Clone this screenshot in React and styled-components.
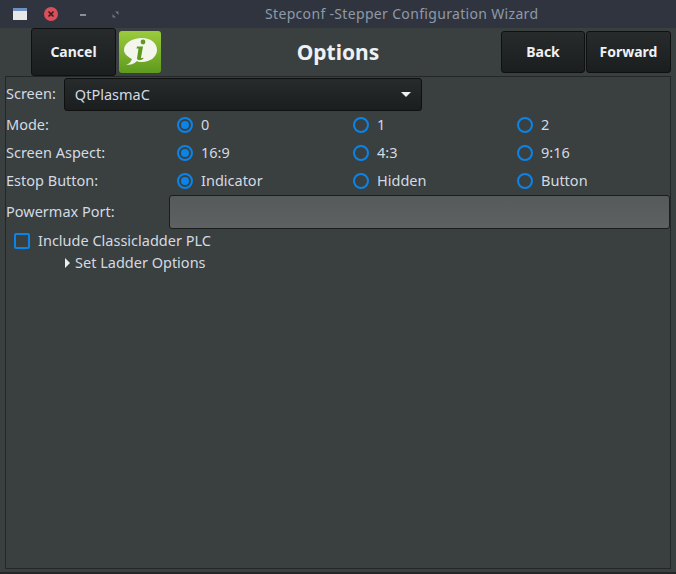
import React from "react";
import styled, { createGlobalStyle } from "styled-components";

const Global = createGlobalStyle`
  html, body { margin: 0; padding: 0; background: #3a3f3f; }
  body { font-family: "Noto Sans", sans-serif; font-size: 14.5px; color: #d3dae3; }
  #root { width: 676px; height: 574px; overflow: hidden; }
`;

const Win = styled.div`
  width: 676px; height: 574px; display: flex; flex-direction: column;
  background: #3a3f3f; box-sizing: border-box; position: relative;
  border-bottom: 2px solid #242727;
`;
const TitleBar = styled.div`
  height: 28px; flex: none; background: #2f343f; display: flex; align-items: center;
  position: relative; box-sizing: border-box; padding-left: 13px; gap: 14px;
`;
const Title = styled.div`
  position: absolute; left: 265px; top: 4px; line-height: 20px; font-size: 14px;
  color: #9099a8; white-space: nowrap; letter-spacing: 0.33px;
`;
const AppIcon = styled.div`
  width: 14px; height: 12px; background: #e8e8e8; border-top: 3px solid #6f8fc0; box-sizing: border-box;
`;
const CloseDot = styled.div`
  width: 14px; height: 14px; border-radius: 50%; background: #d9505a; margin-left: 3px;
  display: flex; align-items: center; justify-content: center;
`;
const WinGlyph = styled.svg`
  width: 9px; height: 9px; margin-left: ${(p) => p.$ml}px; flex: none;
`;
const Toolbar = styled.div`
  height: 48px; flex: none; position: relative; display: flex; align-items: center; padding-left: 31px; padding-right: 5px;
`;
const Btn = styled.button`
  font: 700 14px "Noto Sans", sans-serif; color: #eef1f4; border: 1px solid #0f1111; border-radius: 3px;
  background: linear-gradient(#272b2b, #1a1e1e); width: ${(p) => p.$w}px; height: ${(p) => p.$h}px;
  padding: 0 0 2px; margin-left: ${(p) => p.$ml || 0}px; flex: none; box-sizing: border-box;
`;
const InfoBox = styled.div`
  width: 42px; height: 42px; margin-left: 3px; flex: none; display: flex;
`;
const Heading = styled.div`
  flex: 1; text-align: center; font-weight: 700; font-size: 21px; color: #eef1f4; padding-left: 14px;
`;
const Panel = styled.div`
  flex: 1; margin: 0 5px 3px 5px; border: 1px solid #242727; box-sizing: border-box;
  display: flex; flex-direction: column; padding-top: 1px;
`;
const ScreenRow = styled.div`
  display: flex; align-items: center; height: 32px;
`;
const Label = styled.span`
  white-space: nowrap; line-height: 19px; position: relative; top: -1px;
`;
const PortLabel = styled(Label)`
  width: 163px; flex: none;
`;
const Select = styled.div`
  width: 358px; height: 33px; margin-left: 8px; box-sizing: border-box; border: 1px solid #0f1111; border-radius: 3px;
  background: linear-gradient(#272b2b, #1a1e1e); display: flex; align-items: center; justify-content: space-between;
  padding: 0 10px 0 10px; color: #d3dae3;
`;
const Caret = styled.div`
  width: 0; height: 0; border-left: 5px solid transparent; border-right: 5px solid transparent; border-top: 5px solid #f0f0f0;
`;
const RadioGrid = styled.div`
  display: grid; grid-template-columns: 171px 176px 164px 1fr; grid-auto-rows: 28px; margin-top: 1px;
  align-items: center; height: 84px; padding-top: 0;
`;
const RadioItem = styled.div`
  display: flex; align-items: center; gap: 8px;
`;
const RadioMark = styled.span`
  width: 16px; height: 16px; border-radius: 50%; border: 2px solid #0a84e8; box-sizing: border-box; flex: none;
  display: flex; align-items: center; justify-content: center;
  &::after { content: ""; width: 8px; height: 8px; border-radius: 50%; background: ${(p) => (p.$on ? "#0a84e8" : "transparent")}; }
`;
const PortRow = styled.div`
  display: flex; align-items: center; height: 34px; margin-top: 0;
`;
const PortInput = styled.div`
  width: 501px; height: 34px; box-sizing: border-box; border: 1px solid #1a1d1d; border-radius: 3px;
  background: linear-gradient(#575a5a, #5e6161);
`;
const CheckRow = styled.div`
  display: flex; align-items: center; gap: 8px; height: 24px; padding-left: 8px; margin-top: 0;
`;
const CheckBox = styled.span`
  width: 16px; height: 16px; border: 2px solid #0a84e8; border-radius: 2px; box-sizing: border-box; flex: none;
`;
const Expander = styled.div`
  display: flex; align-items: center; gap: 5px; padding-left: 59px; height: 20px; margin-top: 0;
`;
const Arrow = styled.div`
  width: 0; height: 0; border-top: 5px solid transparent; border-bottom: 5px solid transparent; border-left: 5px solid #eceff1;
`;

const rows = [
  ["Mode:", ["0", "1", "2"]],
  ["Screen Aspect:", ["16:9", "4:3", "9:16"]],
  ["Estop Button:", ["Indicator", "Hidden", "Button"]],
];

export default function App() {
  return (
    <Win>
      <Global />
      <TitleBar>
        <AppIcon />
        <CloseDot>
          <svg width="8" height="8" viewBox="0 0 8 8"><path d="M1.5 1.5l5 5M6.500 1.500l-5 5" stroke="#3a1a20" strokeWidth="1.6" /></svg>
        </CloseDot>
        <WinGlyph $ml={7} viewBox="0 0 9 9"><rect x="1" y="4" width="6" height="2" fill="#8a8f9a" /></WinGlyph>
        <WinGlyph $ml={9} viewBox="0 0 9 9"><path d="M4 1.500h3.500v3.500zM1.500 4l3.500 3.500H1.500z" fill="#70757f" /></WinGlyph>
        <Title>Stepconf -Stepper Configuration Wizard</Title>
      </TitleBar>
      <Toolbar>
        <Btn $w={85} $h={48}>Cancel</Btn>
        <InfoBox>
          <svg width="42" height="42" viewBox="0 0 42 42">
            <defs>
              <linearGradient id="g" x1="0" y1="0" x2="0" y2="1">
                <stop offset="0" stopColor="#9ccb3c" />
                <stop offset="1" stopColor="#5e9a1e" />
              </linearGradient>
            </defs>
            <rect x="0" y="0" width="42" height="42" rx="3" fill="url(#g)" />
            <path d="M23 7c9 0 15 5 15 12s-7 12-15 12c-2 0-4 0-5-1-3 3-7 4-11 4 3-1 5-3 6-6-4-2-8-5-8-9 0-7 8-12 18-12z" fill="#f4f6ee" />
            <circle cx="24" cy="11" r="2.400" fill="#5e9a1e" />
            <path d="M18 15.500h6l-2 11c0 1 1 1 2 0l.5 1c-2 2-6 2.500-6.500 0l1.500-10h-2z" fill="#5e9a1e" />
          </svg>
        </InfoBox>
        <Heading>Options</Heading>
        <Btn $w={84} $h={42}>Back</Btn>
        <Btn $w={85} $h={42} $ml={1}>Forward</Btn>
      </Toolbar>
      <Panel>
        <ScreenRow>
          <Label>Screen:</Label>
          <Select>
            <span>QtPlasmaC</span>
            <Caret />
          </Select>
        </ScreenRow>
        <RadioGrid>
          {rows.map(([label, opts]) => (
            <React.Fragment key={label}>
              <Label>{label}</Label>
              {opts.map((o, i) => (
                <RadioItem key={o}>
                  <RadioMark $on={i === 0} />
                  <Label>{o}</Label>
                </RadioItem>
              ))}
            </React.Fragment>
          ))}
        </RadioGrid>
        <PortRow>
          <PortLabel>Powermax Port:</PortLabel>
          <PortInput />
        </PortRow>
        <CheckRow>
          <CheckBox />
          <Label>Include Classicladder PLC</Label>
        </CheckRow>
        <Expander>
          <Arrow />
          <Label>Set Ladder Options</Label>
        </Expander>
      </Panel>
    </Win>
  );
}
